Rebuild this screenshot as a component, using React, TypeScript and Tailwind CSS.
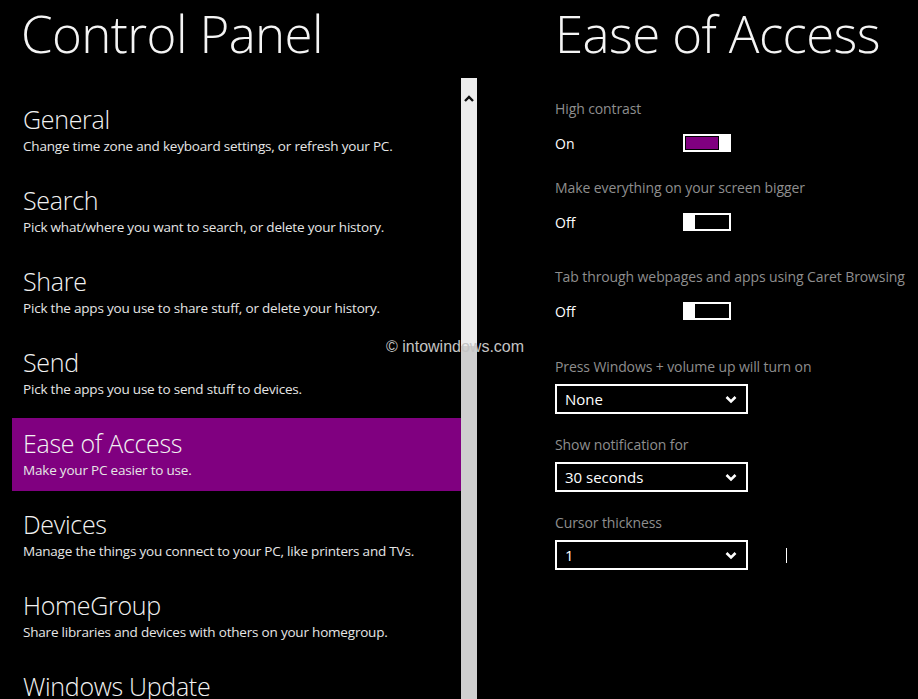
import React from "react";

const items = [
  { t: "General", s: "Change time zone and keyboard settings, or refresh your PC." },
  { t: "Search", s: "Pick what/where you want to search, or delete your history." },
  { t: "Share", s: "Pick the apps you use to share stuff, or delete your history." },
  { t: "Send", s: "Pick the apps you use to send stuff to devices." },
  { t: "Ease of Access", s: "Make your PC easier to use.", active: true },
  { t: "Devices", s: "Manage the things you connect to your PC, like printers and TVs." },
  { t: "HomeGroup", s: "Share libraries and devices with others on your homegroup." },
  { t: "Windows Update", s: "" },
];

function Toggle({ on }: { on: boolean }) {
  return (
    <div className="w-[48px] h-[18px] border-2 border-white bg-black flex">
      {on ? (
        <>
          <div className="flex-1 bg-[#800080] border border-black"></div>
          <div className="w-[10px] bg-white"></div>
        </>
      ) : (
        <>
          <div className="w-[10px] bg-white"></div>
          <div className="flex-1 bg-black"></div>
        </>
      )}
    </div>
  );
}

function Select({ value }: { value: string }) {
  return (
    <div className="w-[193px] h-[30px] border-2 border-white flex items-center justify-between pl-[8px] pr-[9px]">
      <span className="text-[15px] text-white leading-none">{value}</span>
      <svg width="12" height="9" viewBox="0 0 12 9">
        <polyline points="1.5,2 6,6.5 10.5,2" fill="none" stroke="white" strokeWidth="2.6" />
      </svg>
    </div>
  );
}

export default function App() {
  const font = { fontFamily: '"Open Sans", "Noto Sans", sans-serif' };
  const label = "text-[14px] tracking-[-0.1px] text-[#8e8e8e] leading-[20px] whitespace-nowrap";
  return (
    <div className="relative w-[918px] h-[699px] bg-black overflow-hidden flex text-white" style={font}>
      {/* Left column */}
      <div className="w-[461px] flex flex-col shrink-0">
        <div className="shrink-0 pl-[21px] pt-[3px] h-[94px] text-[51px] font-light leading-[60px] tracking-[-0.6px] text-[#f4f4f4] whitespace-nowrap">
          Control Panel
        </div>
        <div className="shrink-0 flex flex-col gap-[8px] pl-[12px]">
          {items.map((it) => (
            <div
              key={it.t}
              className={`shrink-0 h-[73px] pl-[11px] pt-[10px] ${it.active ? "bg-[#800080]" : ""}`}
            >
              <div className="text-[25px] font-light leading-[31px] tracking-[-0.3px] text-[#f2f2f2] whitespace-nowrap">
                {it.t}
              </div>
              <div className="mt-[2px] text-[13.5px] leading-[18px] text-[#e6e6e6] tracking-[-0.2px] whitespace-nowrap">
                {it.s}
              </div>
            </div>
          ))}
        </div>
      </div>

      {/* Scrollbar */}
      <div className="w-[16px] mt-[78px] flex flex-col shrink-0">
        <div className="h-[268px] bg-[#ececec] flex justify-center pt-[17px]">
          <svg width="10" height="7" viewBox="0 0 10 7">
            <polyline points="1,6 5,2 9,6" fill="none" stroke="#111" strokeWidth="2.4" />
          </svg>
        </div>
        <div className="flex-1 bg-[#cfcfcf]"></div>
      </div>

      {/* Right column */}
      <div className="flex-1 pl-[78px] flex flex-col">
        <div className="shrink-0 pt-[3px] h-[94px] text-[51px] font-light leading-[60px] tracking-[-0.6px] text-[#f4f4f4] whitespace-nowrap">
          Ease of Access
        </div>
        <div className={`${label} mt-[5px]`}>High contrast</div>
        <div className="flex items-center mt-[14px] h-[20px]">
          <span className="w-[128px] text-[14px] text-white">On</span>
          <Toggle on />
        </div>
        <div className={`${label} mt-[25px]`}>Make everything on your screen bigger</div>
        <div className="flex items-center mt-[14px] h-[20px]">
          <span className="w-[128px] text-[14px] text-white">Off</span>
          <Toggle on={false} />
        </div>
        <div className={`${label} mt-[35px]`}>Tab through webpages and apps using Caret Browsing</div>
        <div className="flex items-center mt-[14px] h-[20px]">
          <span className="w-[128px] text-[14px] text-white">Off</span>
          <Toggle on={false} />
        </div>
        <div className={`${label} mt-[36px]`}>Press Windows + volume up will turn on</div>
        <div className="mt-[7px]">
          <Select value="None" />
        </div>
        <div className={`${label} mt-[21px]`}>Show notification for</div>
        <div className="mt-[7px]">
          <Select value="30 seconds" />
        </div>
        <div className={`${label} mt-[21px]`}>Cursor thickness</div>
        <div className="mt-[7px] flex items-center">
          <Select value="1" />
          <div className="ml-[38px] w-[1px] h-[15px] bg-white"></div>
        </div>
      </div>

      {/* Watermark */}
      <div
        className="absolute left-[386px] top-[337px] text-[16px] text-[#c4c4c4] leading-[20px]"
        style={{ fontFamily: '"Liberation Sans", Arial, sans-serif' }}
      >
        © intowindows.com
      </div>
    </div>
  );
}
